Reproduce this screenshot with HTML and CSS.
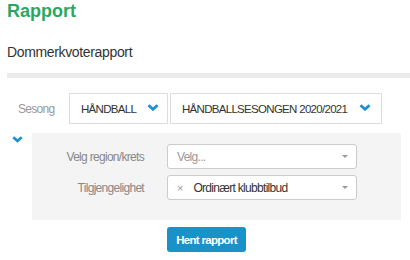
FILE: index.html
```html
<!DOCTYPE html>
<html lang="no">
<head>
<meta charset="utf-8">
<title>Rapport</title>
<link rel="stylesheet" href="styles.css">
</head>
<body>
<div class="page">
  <h1 class="title">Rapport</h1>
  <div class="subtitle">Dommerkvoterapport</div>
  <div class="divider"></div>

  <div class="season-row">
    <span class="season-label">Sesong</span>
    <div class="select select-sport">
      <span>HÅNDBALL</span>
      <svg class="chev" width="12" height="7" viewBox="0 0 12 7"><polyline points="1.5,1.3 6,5.3 10.5,1.3" fill="none" stroke="#1d8fd2" stroke-width="2.8"/></svg>
    </div>
    <div class="select select-season">
      <span>HÅNDBALLSESONGEN 2020/2021</span>
      <svg class="chev" width="12" height="7" viewBox="0 0 12 7"><polyline points="1.5,1.3 6,5.3 10.5,1.3" fill="none" stroke="#1d8fd2" stroke-width="2.8"/></svg>
    </div>
  </div>

  <div class="filters">
    <div class="toggle">
      <svg width="11" height="7" viewBox="0 0 11 7"><polyline points="1.3,1.3 5.5,5 9.7,1.3" fill="none" stroke="#1d8fd2" stroke-width="2.6"/></svg>
    </div>
    <div class="panel">
      <div class="field-row">
        <label class="field-label">Velg region/krets</label>
        <div class="combo">
          <span class="placeholder">Velg...</span>
          <span class="caret"></span>
        </div>
      </div>
      <div class="field-row">
        <label class="field-label">Tilgjengelighet</label>
        <div class="combo">
          <span class="value"><span class="remove">×</span>Ordinært klubbtilbud</span>
          <span class="caret"></span>
        </div>
      </div>
    </div>
  </div>

  <div class="actions">
    <button class="btn" type="button">Hent rapport</button>
  </div>
</div>
</body>
</html>
```

FILE: styles.css
```css
html, body {
  margin: 0;
  padding: 0;
  background: #fff;
}

body {
  font-family: "Liberation Sans", Arial, sans-serif;
  color: #333;
}

.page {
  padding-left: 7px;
}

.title {
  margin: 0;
  font-size: 18px;
  line-height: 22px;
  font-weight: bold;
  color: #2aa862;
}

.subtitle {
  margin-top: 20px;
  font-size: 14px;
  line-height: 20px;
  letter-spacing: -0.35px;
  color: #333;
}

.divider {
  margin-top: 11px;
  height: 5px;
  background: #ebebeb;
}

.season-row {
  margin-top: 15px;
  display: flex;
  align-items: center;
  height: 31px;
}

.season-label {
  box-sizing: border-box;
  width: 62px;
  padding-left: 11px;
  font-size: 12px;
  letter-spacing: -0.7px;
  color: #999;
}

.select {
  box-sizing: border-box;
  height: 31px;
  border: 1px solid #ddd;
  display: flex;
  align-items: center;
  justify-content: space-between;
  font-size: 11.5px;
  letter-spacing: -0.7px;
  color: #333;
}

.select-sport {
  width: 99px;
  padding: 0 8px 0 11px;
  margin-right: 2px;
}

.select-season {
  width: 212px;
  padding: 0 10px 0 11px;
}

.chev {
  display: block;
  margin-top: -2px;
}

.filters {
  margin-top: 9px;
  display: flex;
}

.toggle {
  width: 25px;
  padding-top: 3px;
}

.toggle svg {
  display: block;
  margin-left: 5px;
}

.panel {
  box-sizing: border-box;
  width: 369px;
  height: 87px;
  padding-top: 11px;
  background: #f4f4f4;
  display: flex;
  flex-direction: column;
  gap: 6px;
}

.field-row {
  display: grid;
  grid-template-columns: 112px 190px;
  column-gap: 23px;
  align-items: center;
}

.field-label {
  text-align: right;
  font-size: 12px;
  letter-spacing: -0.7px;
  color: #888;
}

.combo {
  box-sizing: border-box;
  height: 25px;
  border: 1px solid #ccc;
  border-radius: 3px;
  background: #fff;
  display: flex;
  align-items: center;
  justify-content: space-between;
  padding: 0 8px 0 9px;
  font-size: 12px;
  letter-spacing: -0.7px;
}

.placeholder {
  color: #999;
}

.value {
  color: #333;
}

.remove {
  display: inline-block;
  color: #999;
  font-size: 11px;
  margin-right: 10px;
  letter-spacing: 0;
}

.caret {
  width: 0;
  height: 0;
  border-left: 3px solid transparent;
  border-right: 3px solid transparent;
  border-top: 3px solid #999;
}

.actions {
  margin-top: 7px;
  padding-left: 160px;
}

.btn {
  display: block;
  width: 79px;
  height: 25px;
  border: none;
  border-radius: 3px;
  background: #1992ca;
  color: #fff;
  font-family: "Liberation Sans", Arial, sans-serif;
  font-size: 11.5px;
  font-weight: bold;
  letter-spacing: -0.7px;
  padding: 0;
}
```
